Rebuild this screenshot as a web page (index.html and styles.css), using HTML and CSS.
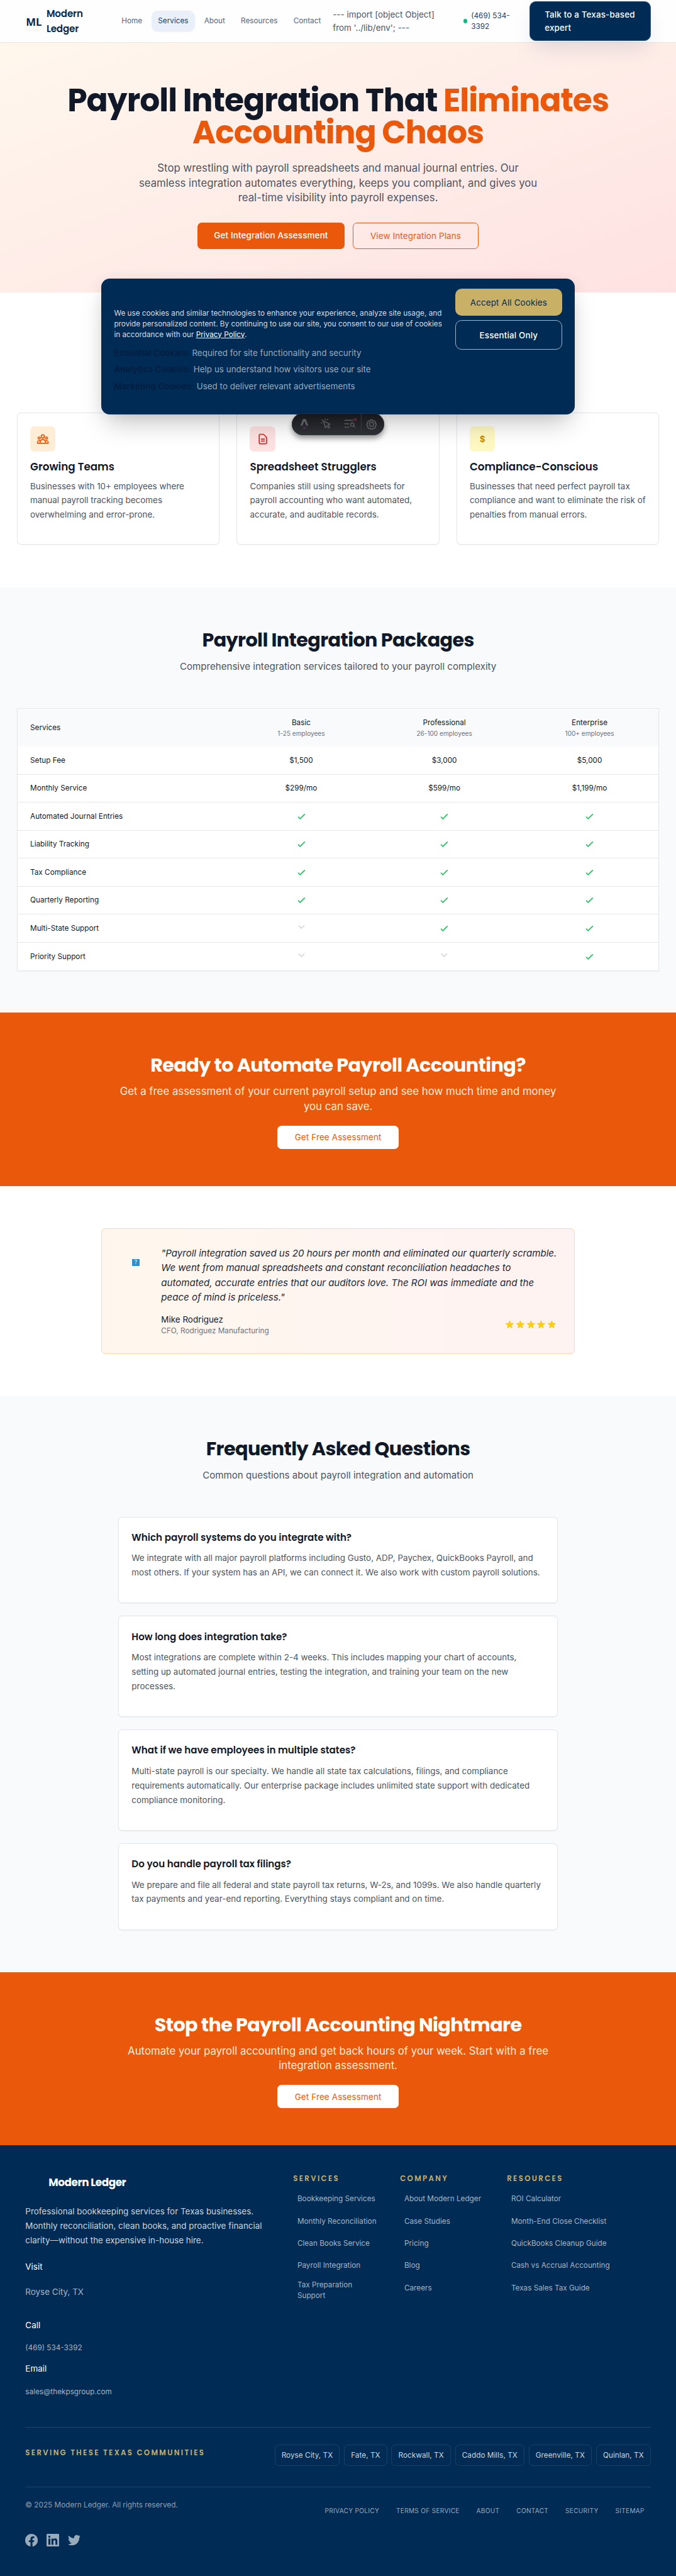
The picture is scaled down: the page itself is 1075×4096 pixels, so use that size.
FILE: index.html
```html
<!DOCTYPE html>
<html lang="en">
<head>
<meta charset="utf-8">
<title>Payroll Integration | Modern Ledger</title>
<link rel="stylesheet" href="styles.css">
</head>
<body>
<svg class="defs" width="0" height="0" aria-hidden="true">
  <symbol id="check" viewBox="0 0 24 24"><path d="M5 13l4 4L19 7" fill="none" stroke="currentColor" stroke-width="2.4" stroke-linecap="round" stroke-linejoin="round"/></symbol>
  <symbol id="none" viewBox="0 0 20 20"><path d="M5 4.500l5 5 5-5" fill="none" stroke="currentColor" stroke-width="2" stroke-linecap="round" stroke-linejoin="round"/></symbol>
  <symbol id="star" viewBox="0 0 20 20"><path fill="currentColor" d="M9.049 2.927c.3-.921 1.603-.921 1.902 0l1.070 3.292a1 1 0 00.950.690h3.462c.969 0 1.371 1.240.588 1.810l-2.800 2.034a1 1 0 00-.364 1.118l1.070 3.292c.3.921-.755 1.688-1.540 1.118l-2.800-2.034a1 1 0 00-1.175 0l-2.800 2.034c-.784.570-1.838-.197-1.539-1.118l1.070-3.292a1 1 0 00-.364-1.118L2.980 8.720c-.783-.570-.380-1.810.588-1.810h3.461a1 1 0 00.951-.690l1.070-3.292z"/></symbol>
</svg>
<div class="page">
  <header class="header">
    <span class="logo">ML</span>
    <span class="brand">Modern Ledger</span>
    <nav class="nav">
      <a>Home</a><a class="active">Services</a><a>About</a><a>Resources</a><a>Contact</a>
    </nav>
    <span class="env">--- import [object Object] from '../lib/env'; ---</span>
    <span class="phone"><i class="dot"></i><span>(469) 534-<br>3392</span></span>
    <a class="talk">Talk to a Texas-based expert</a>
  </header>

  <section class="hero">
    <h1>Payroll Integration That <span>Eliminates<br>Accounting Chaos</span></h1>
    <p>Stop wrestling with payroll spreadsheets and manual journal entries. Our seamless integration automates everything, keeps you compliant, and gives you real-time visibility into payroll expenses.</p>
    <div class="hero-actions">
      <a class="btn-primary">Get Integration Assessment</a>
      <a class="btn-outline">View Integration Plans</a>
    </div>
  </section>

  <section class="audience">
    <article class="card">
      <div class="icon orange"><svg width="24" height="24" viewBox="0 0 24 24" fill="none" stroke="currentColor" stroke-width="2" stroke-linecap="round" stroke-linejoin="round"><path d="M17 20h5v-2a3 3 0 00-5.356-1.857M17 20H7m10 0v-2c0-.656-.126-1.283-.356-1.857M7 20H2v-2a3 3 0 015.356-1.857M7 20v-2c0-.656.126-1.283.356-1.857m0 0a5.002 5.002 0 019.288 0M15 7a3 3 0 11-6 0 3 3 0 016 0zm6 3a2 2 0 11-4 0 2 2 0 014 0zM7 10a2 2 0 11-4 0 2 2 0 014 0z"/></svg></div>
      <h3>Growing Teams</h3>
      <p>Businesses with 10+ employees where manual payroll tracking becomes overwhelming and error-prone.</p>
    </article>
    <article class="card">
      <div class="icon red"><svg width="24" height="24" viewBox="0 0 24 24" fill="none" stroke="currentColor" stroke-width="2" stroke-linecap="round" stroke-linejoin="round"><path d="M9 12h6m-6 4h6m2 5H7a2 2 0 01-2-2V5a2 2 0 012-2h5.586a1 1 0 01.707.293l5.414 5.414a1 1 0 01.293.707V19a2 2 0 01-2 2z"/></svg></div>
      <h3>Spreadsheet Strugglers</h3>
      <p>Companies still using spreadsheets for payroll accounting who want automated, accurate, and auditable records.</p>
    </article>
    <article class="card">
      <div class="icon yellow">$</div>
      <h3>Compliance-Conscious</h3>
      <p>Businesses that need perfect payroll tax compliance and want to eliminate the risk of penalties from manual errors.</p>
    </article>
  </section>

  <section class="packages">
    <h2>Payroll Integration Packages</h2>
    <p class="sub">Comprehensive integration services tailored to your payroll complexity</p>
    <div class="table">
      <div class="row head"><span>Services</span><span>Basic<small>1-25 employees</small></span><span>Professional<small>26-100 employees</small></span><span>Enterprise<small>100+ employees</small></span></div>
      <div class="row"><span>Setup Fee</span><span>$1,500</span><span>$3,000</span><span>$5,000</span></div>
      <div class="row"><span>Monthly Service</span><span>$299/mo</span><span>$599/mo</span><span>$1,199/mo</span></div>
      <div class="row"><span>Automated Journal Entries</span><svg class="yes"><use href="#check"/></svg><svg class="yes"><use href="#check"/></svg><svg class="yes"><use href="#check"/></svg></div>
      <div class="row"><span>Liability Tracking</span><svg class="yes"><use href="#check"/></svg><svg class="yes"><use href="#check"/></svg><svg class="yes"><use href="#check"/></svg></div>
      <div class="row"><span>Tax Compliance</span><svg class="yes"><use href="#check"/></svg><svg class="yes"><use href="#check"/></svg><svg class="yes"><use href="#check"/></svg></div>
      <div class="row"><span>Quarterly Reporting</span><svg class="yes"><use href="#check"/></svg><svg class="yes"><use href="#check"/></svg><svg class="yes"><use href="#check"/></svg></div>
      <div class="row"><span>Multi-State Support</span><svg class="no"><use href="#none"/></svg><svg class="yes"><use href="#check"/></svg><svg class="yes"><use href="#check"/></svg></div>
      <div class="row"><span>Priority Support</span><svg class="no"><use href="#none"/></svg><svg class="no"><use href="#none"/></svg><svg class="yes"><use href="#check"/></svg></div>
    </div>
  </section>

  <section class="cta">
    <h2>Ready to Automate Payroll Accounting?</h2>
    <p>Get a free assessment of your current payroll setup and see how much time and money you can save.</p>
    <a>Get Free Assessment</a>
  </section>

  <section class="testimonial">
    <div class="quote-card">
      <div class="avatar"><span>?</span></div>
      <div class="quote">
        <blockquote>"Payroll integration saved us 20 hours per month and eliminated our quarterly scramble. We went from manual spreadsheets and constant reconciliation headaches to automated, accurate entries that our auditors love. The ROI was immediate and the peace of mind is priceless."</blockquote>
        <div class="author">
          <div><b>Mike Rodriguez</b><small>CFO, Rodriguez Manufacturing</small></div>
          <div class="stars"><svg><use href="#star"/></svg><svg><use href="#star"/></svg><svg><use href="#star"/></svg><svg><use href="#star"/></svg><svg><use href="#star"/></svg></div>
        </div>
      </div>
    </div>
  </section>

  <section class="faq">
    <h2>Frequently Asked Questions</h2>
    <p class="sub">Common questions about payroll integration and automation</p>
    <div class="faq-list">
      <article><h3>Which payroll systems do you integrate with?</h3><p>We integrate with all major payroll platforms including Gusto, ADP, Paychex, QuickBooks Payroll, and most others. If your system has an API, we can connect it. We also work with custom payroll solutions.</p></article>
      <article><h3>How long does integration take?</h3><p>Most integrations are complete within 2-4 weeks. This includes mapping your chart of accounts, setting up automated journal entries, testing the integration, and training your team on the new processes.</p></article>
      <article><h3>What if we have employees in multiple states?</h3><p>Multi-state payroll is our specialty. We handle all state tax calculations, filings, and compliance requirements automatically. Our enterprise package includes unlimited state support with dedicated compliance monitoring.</p></article>
      <article><h3>Do you handle payroll tax filings?</h3><p>We prepare and file all federal and state payroll tax returns, W-2s, and 1099s. We also handle quarterly tax payments and year-end reporting. Everything stays compliant and on time.</p></article>
    </div>
  </section>

  <section class="cta">
    <h2>Stop the Payroll Accounting Nightmare</h2>
    <p>Automate your payroll accounting and get back hours of your week. Start with a free integration assessment.</p>
    <a>Get Free Assessment</a>
  </section>

  <footer class="footer">
    <div class="footer-grid">
      <div class="about">
        <div class="footer-brand">Modern Ledger</div>
        <p>Professional bookkeeping services for Texas businesses. Monthly reconciliation, clean books, and proactive financial clarity—without the expensive in-house hire.</p>
        <div class="label visit">Visit</div>
        <div class="city">Royse City, TX</div>
        <div class="label call">Call</div>
        <div class="contact">(469) 534-3392</div>
        <div class="label email">Email</div>
        <div class="contact">sales@thekpsgroup.com</div>
      </div>
      <div class="links"><h4>SERVICES</h4><a>Bookkeeping Services</a><a>Monthly Reconciliation</a><a>Clean Books Service</a><a>Payroll Integration</a><a>Tax Preparation<br>Support</a></div>
      <div class="links"><h4>COMPANY</h4><a>About Modern Ledger</a><a>Case Studies</a><a>Pricing</a><a>Blog</a><a>Careers</a></div>
      <div class="links"><h4>RESOURCES</h4><a>ROI Calculator</a><a>Month-End Close Checklist</a><a>QuickBooks Cleanup Guide</a><a>Cash vs Accrual Accounting</a><a>Texas Sales Tax Guide</a></div>
    </div>
    <div class="communities">
      <h4>SERVING THESE TEXAS COMMUNITIES</h4>
      <div class="pills"><span>Royse City, TX</span><span>Fate, TX</span><span>Rockwall, TX</span><span>Caddo Mills, TX</span><span>Greenville, TX</span><span>Quinlan, TX</span></div>
    </div>
    <div class="legal">
      <div>© 2025 Modern Ledger. All rights reserved.</div>
      <nav><a>PRIVACY POLICY</a><a>TERMS OF SERVICE</a><a>ABOUT</a><a>CONTACT</a><a>SECURITY</a><a>SITEMAP</a></nav>
    </div>
    <div class="social">
      <svg viewBox="0 0 24 24"><path d="M24 12.073c0-6.627-5.373-12-12-12s-12 5.373-12 12c0 5.990 4.388 10.954 10.125 11.854v-8.385H7.078v-3.470h3.047V9.430c0-3.007 1.792-4.669 4.533-4.669 1.312 0 2.686.235 2.686.235v2.953H15.830c-1.491 0-1.956.925-1.956 1.874v2.250h3.328l-.532 3.470h-2.796v8.385C19.612 23.027 24 18.062 24 12.073z"/></svg>
      <svg viewBox="0 0 24 24"><path d="M20.447 20.452h-3.554v-5.569c0-1.328-.027-3.037-1.852-3.037-1.853 0-2.136 1.445-2.136 2.939v5.667H9.351V9h3.414v1.561h.046c.477-.9 1.637-1.850 3.370-1.850 3.601 0 4.267 2.370 4.267 5.455v6.286zM5.337 7.433a2.062 2.062 0 01-2.063-2.065 2.064 2.064 0 112.063 2.065zm1.782 13.019H3.555V9h3.564v11.452zM22.225 0H1.771C.792 0 0 .774 0 1.729v20.542C0 23.227.792 24 1.771 24h20.451C23.200 24 24 23.227 24 22.271V1.729C24 .774 23.200 0 22.222 0h.003z"/></svg>
      <svg viewBox="0 0 24 24"><path d="M23.953 4.570a10 10 0 01-2.825.775 4.958 4.958 0 002.163-2.723c-.951.555-2.005.959-3.127 1.184a4.920 4.920 0 00-8.384 4.482C7.690 8.095 4.067 6.130 1.640 3.162a4.822 4.822 0 00-.666 2.475c0 1.710.870 3.213 2.188 4.096a4.904 4.904 0 01-2.228-.616v.060a4.923 4.923 0 003.946 4.827 4.996 4.996 0 01-2.212.085 4.936 4.936 0 004.604 3.417 9.867 9.867 0 01-6.102 2.105c-.390 0-.779-.023-1.170-.067a13.995 13.995 0 007.557 2.209c9.053 0 13.998-7.496 13.998-13.985 0-.210 0-.420-.015-.630A9.935 9.935 0 0024 4.590z"/></svg>
    </div>
  </footer>

  <div class="cookies">
    <div class="cookie-text">
      <p>We use cookies and similar technologies to enhance your experience, analyze site usage, and provide personalized content. By continuing to use our site, you consent to our use of cookies in accordance with our <a>Privacy Policy</a>.</p>
      <ul>
        <li><b>Essential Cookies:</b> Required for site functionality and security</li>
        <li><b>Analytics Cookies:</b> Help us understand how visitors use our site</li>
        <li><b>Marketing Cookies:</b> Used to deliver relevant advertisements</li>
      </ul>
    </div>
    <div class="cookie-actions"><a class="accept">Accept All Cookies</a><a class="essential">Essential Only</a></div>
  </div>

  <div class="devbar">
    <svg width="175" height="42" viewBox="0 0 175 42" fill="none" stroke="#55565a" stroke-width="2" stroke-linecap="round" stroke-linejoin="round">
      <path stroke="none" fill="#5a5b5f" d="M16.300 24 21 11h5.500l5 13-4.600-1.200L23.800 14.500 20.600 22.800Z"/>
      <path stroke="none" fill="#552d59" d="M20 25.500q4 1.500 7.500 0l-3.700 5.500Z"/>
      <path d="M60 14.500l3.500 13 2.800-3.300 3.500 4 2-1.800-3.500-4 4-1.700zM57 18.500l-1-.3M58 13.500l-.8-.8M63.500 12l.2-1M67.500 12.500l.6-.9"/>
      <path d="M100.500 13.500h15M100.500 20h7M100.500 26.500h8"/><circle cx="114.500" cy="21.500" r="3.200"/><path d="M117 24l2.300 2.500"/>
      <circle cx="120" cy="12" r="3.500" fill="#4a2635" stroke="none"/>
      <path d="M131.500 1v40" stroke="#34353b" stroke-width="1.500" stroke-linecap="butt"/>
      <circle cx="151" cy="21" r="3.800"/>
      <path d="M149 12.700h4l.7 2.400 2.400-.8 2.700 2.800-1 2.200 2 1v2.700l-2 1 1 2.400-2.800 2.700-2.300-1-.7 2.200h-4l-.7-2.200-2.300 1-2.800-2.700 1-2.400-2-1v-2.700l2-1-1-2.200 2.700-2.800 2.400.8Z"/>
    </svg>
  </div>
</div>
</body>
</html>
```
FILE: styles.css
```css
* { box-sizing: border-box; }
body, h1, h2, h3, h4, p, ul, blockquote { margin: 0; padding: 0; }
body {
  font: 400 16px/24px Inter, "Liberation Sans", sans-serif;
  color: #111827;
  background: #fff;
  overflow: hidden;
}
.defs { position: absolute; }
.page { position: relative; width: 1280px; height: 4876.190px; zoom: 0.84; overflow: hidden; }
h1, h2, h3, h4, .brand, .footer-brand { font-family: Poppins, Inter, sans-serif; }
h2 { font-size: 36px; line-height: 40px; font-weight: 700; letter-spacing: -0.02em; text-align: center; }
.sub { margin-top: 16px; font-size: 18px; line-height: 28px; color: #4b5563; text-align: center; }

/* Header */
.header {
  position: relative;
  z-index: 1;
  display: flex;
  align-items: center;
  height: 81px;
  padding: 0 48px;
  background: #fefeff;
  border-bottom: 1px solid #e1e7ef;
}
.logo {
  width: 32px; height: 32px; flex: none;
  border-radius: 6px;
  background: #fff;
  box-shadow: 0 1px 2px rgba(0, 0, 0, .06);
  font: 700 20px/36px "Noto Sans", sans-serif;
  color: #002b55;
  text-align: center;
}
.brand { width: 130px; flex: none; padding: 0 50px 0 8px; font-size: 18px; line-height: 28px; font-weight: 600; color: #002b55; letter-spacing: -.01em; }
.nav { display: flex; gap: 6px; flex: none; width: 404px; margin-left: 8px; }
.nav a { padding: 10px 12px; border-radius: 12px; font-size: 14px; line-height: 20px; color: #5a6576; }
.nav .active { background: #e9f0f9; color: #1c3f66; box-shadow: 0 1px 2px rgba(0, 0, 0, .06); }
.env { width: 247px; margin-left: 8px; padding-right: 40px; flex: none; color: #4b5563; }
.phone { display: flex; align-items: center; gap: 7px; width: 126px; flex: none; font-size: 14px; line-height: 20px; color: #16406b; }
.dot { width: 8px; height: 8px; border-radius: 50%; background: #10b981; }
.talk {
  width: 229px; flex: none;
  padding: 12.500px 27px;
  border-radius: 12px;
  border: 1px solid #33557a;
  background: #002b55;
  color: #fff;
  font-weight: 500;
  letter-spacing: .01em;
  box-shadow: 0 20px 40px -8px rgba(0, 43, 85, .13);
}

/* Hero */
.hero { height: 472px; padding-top: 80px; background: linear-gradient(to bottom right, #fff7ed, #fee2e2); text-align: center; }
h1 { font-size: 60px; line-height: 60px; font-weight: 700; letter-spacing: -0.02em; }
h1 span { color: #ea580c; }
.hero p { width: 768px; margin: 24px auto 32px; font-size: 20px; line-height: 28px; color: #4b5563; }
.hero-actions { display: flex; justify-content: center; gap: 16px; letter-spacing: .01em; }
.btn-primary { padding: 12px 31px; border-radius: 8px; background: #ea580c; color: #fff; font-weight: 500; }
.btn-outline { padding: 12px 32px; border-radius: 8px; border: 2px solid #ea580c; color: #ea580c; }

/* Audience cards */
.audience { display: grid; grid-template-columns: repeat(3, 1fr); gap: 32px; align-content: start; height: 559px; padding: 228.500px 32px 0; }
.card { height: 250px; padding: 24px; border: 1px solid #e5e7eb; border-radius: 8px; background: #fff; box-shadow: 0 1px 2px rgba(0, 0, 0, .05); }
.icon { display: flex; align-items: center; justify-content: center; width: 48px; height: 48px; border-radius: 8px; }
.orange { background: #ffedd5; color: #ea580c; }
.red { background: #fee2e2; color: #dc2626; }
.yellow { background: #fef9c3; color: #ca8a04; font-weight: 700; }
.card h3 { margin-top: 16px; font-size: 20px; line-height: 28px; font-weight: 600; }
.card p { margin-top: 8px; line-height: 27.200px; color: #4b5563; }

/* Packages */
.packages { height: 805px; padding: 80px 32px 0; background: #f9fafb; }
.table { margin-top: 64px; border: 1px solid #e5e7eb; background: #fff; font-size: 14px; line-height: 20px; box-shadow: 0 1px 2px rgba(0, 0, 0, .05); }
.row { display: grid; grid-template-columns: 410px 254px 288px 262px; align-items: center; justify-items: center; height: 53px; padding-top: 1px; border-bottom: 1px solid #e5e7eb; }
.row:last-child { border-bottom: 0; }
.row span:first-child { justify-self: start; padding-left: 24px; }
.head { height: 72px; background: #f9fafb; border-bottom: 0; text-align: center; }
.head small { display: block; margin-top: 2px; font-size: 12px; line-height: 16px; color: #6b7280; }
.row svg { width: 20px; height: 20px; }
.yes { color: #22c55e; }
.no { color: #d1d5db; }

/* Call to action */
.cta { display: flex; flex-direction: column; align-items: center; height: 328px; padding-top: 80px; background: #ea580c; color: #fff; }
.cta p { width: 832px; margin-top: 16px; font-size: 20px; line-height: 28px; color: #ffedd5; text-align: center; }
.cta a { margin-top: 22px; padding: 10px 32.500px; border-radius: 8px; background: #fff; color: #ea580c; letter-spacing: .01em; }

/* Testimonial */
.testimonial { height: 398px; padding: 80px 192px 0; }
.quote-card { display: flex; gap: 16px; height: 238px; padding: 32px; border: 1px solid #fed7aa; border-radius: 8px; background: linear-gradient(to right, #fff7ed, #fef2f2); }
.avatar { display: flex; align-items: center; justify-content: center; flex: none; width: 64px; height: 64px; }
.avatar span { width: 16px; height: 16px; border: 1px solid #9cc9ea; outline: 1px solid #fff; outline-offset: -2px; background: #2a8fcb; color: #fff; font-size: 10px; line-height: 14px; text-align: center; }
.quote { flex: 1; }
blockquote { font-size: 18px; line-height: 28px; font-style: italic; letter-spacing: -.05px; color: #1f2937; margin-right: -6px; }
.author { display: flex; justify-content: space-between; align-items: center; margin-top: 16px; }
.author b { display: block; font-weight: 400; }
.author small { display: block; font-size: 14px; line-height: 20px; color: #6b7280; }
.stars { display: flex; color: #facc15; }
.stars svg { width: 20px; height: 20px; }

/* FAQ */
.faq { height: 1090px; padding: 80px 224px 0; background: #f9fafb; }
.faq-list { display: flex; flex-direction: column; gap: 24px; margin-top: 64px; }
.faq article { padding: 24px 24px 43.200px; border: 1px solid #e5e7eb; border-radius: 8px; background: #fff; box-shadow: 0 1px 2px rgba(0, 0, 0, .06); }
.faq h3 { font-size: 18px; line-height: 28px; font-weight: 600; }
.faq article p { margin-top: 12px; line-height: 27.200px; color: #4b5563; }

/* Footer */
.footer { height: 816px; padding: 57.500px 48px 0; background: #002b55; color: #fff; }
.footer-grid { display: grid; grid-template-columns: 507px 202.400px 202.400px 1fr; height: 476px; }
.footer-brand { padding-left: 44px; font-size: 20px; line-height: 28px; font-weight: 700; letter-spacing: -0.025em; }
.about p { width: 460px; margin-top: 26px; line-height: 27.200px; color: #ccd5dd; }
.visit { margin-top: 24px; }
.city { margin-top: 24px; color: #a6b5c4; }
.call { margin-top: 39px; }
.contact { margin-top: 19.400px; font-size: 14px; color: #a6b5c4; }
.email { margin-top: 15.600px; }
.footer h4 { font-size: 14px; line-height: 20px; font-weight: 600; letter-spacing: .2em; color: #c9b067; }
.links { display: flex; flex-direction: column; gap: 2px; margin-top: -4.500px; }
.links h4 { margin-bottom: 7px; }
.links a { display: flex; align-items: center; min-height: 40px; padding: 5px 8px; font-size: 14px; line-height: 20px; color: #a6b5c4; }
.communities { display: flex; justify-content: space-between; height: 113px; padding-top: 32px; border-top: 1px solid rgba(255, 255, 255, .12); }
.communities h4 { margin-top: 6px; }
.pills { display: flex; gap: 8px; height: 40px; }
.pills span { padding: 9px 12px; border: 1px solid rgba(255, 255, 255, .1); border-radius: 8px; font-size: 14px; line-height: 20px; letter-spacing: .05px; color: #ccd5dd; }
.legal { display: flex; justify-content: space-between; height: 89px; padding-top: 24px; border-top: 1px solid rgba(255, 255, 255, .12); font-size: 14px; line-height: 20px; color: #8da0b3; }
.legal nav { display: flex; gap: 8px; padding-top: 10px; font-size: 12px; letter-spacing: .36px; color: #99aabb; }
.legal a { padding: 0 12px; }
.social { display: flex; gap: 16px; }
.social svg { width: 24px; height: 24px; fill: #99aabb; }

/* Cookie banner */
.cookies {
  position: absolute; left: 192px; top: 527px; z-index: 2;
  display: flex; justify-content: space-between;
  width: 896px; height: 257px;
  padding: 20px 24px 0;
  border-radius: 16px;
  background: #002b55;
  box-shadow: 0 25px 50px -12px rgba(0, 0, 0, .25), 0 0 24px rgba(0, 0, 0, .05);
}
.cookie-text { width: 624px; padding-top: 36.500px; }
.cookie-text p { font-size: 14px; line-height: 20px; color: #d5dde5; }
.cookie-text p a { color: #fff; text-decoration: underline; }
.cookie-text ul { display: flex; flex-direction: column; gap: 4px; margin-top: 11.500px; list-style: none; line-height: 27.200px; color: #99aabb; }
.cookie-text b { font-weight: 600; color: #001d3f; letter-spacing: .005em; }
.cookie-actions { display: flex; flex-direction: column; gap: 8.500px; width: 202px; text-align: center; letter-spacing: .01em; }
.accept { padding: 14px 0 12.500px; border-radius: 12px; background: #c9b067; color: #002b55; }
.essential { padding: 15px 0 14px; border: 1px solid #a3b4c6; border-radius: 12px; color: #fff; font-weight: 500; }

/* Developer toolbar */
.devbar {
  position: absolute; left: 552.500px; top: 782px; z-index: 3;
  width: 175px; height: 42px;
  border-radius: 21px;
  background: linear-gradient(#15161a, #303136);
  box-shadow: inset 0 0 0 1px #343841, 0 6px 10px rgba(0, 0, 0, .4);
}
.devbar svg { display: block; }
```
